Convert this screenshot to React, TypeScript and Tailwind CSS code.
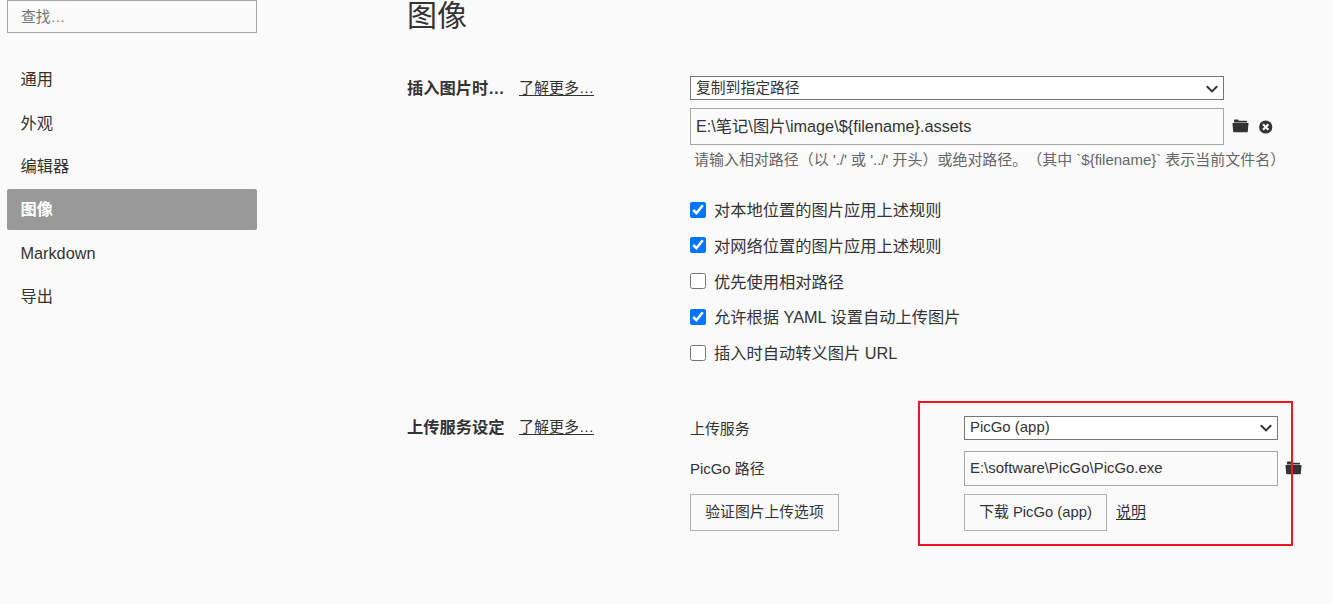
import { useState } from "react";

const NAV_ITEMS = ["通用", "外观", "编辑器", "图像", "Markdown", "导出"];

const RULES = [
  { label: "对本地位置的图片应用上述规则", checked: true },
  { label: "对网络位置的图片应用上述规则", checked: true },
  { label: "优先使用相对路径", checked: false },
  { label: "允许根据 YAML 设置自动上传图片", checked: true },
  { label: "插入时自动转义图片 URL", checked: false },
];

function FolderIcon() {
  return (
    <svg width="17" height="14" viewBox="0 0 17 14" fill="#333" className="mb-px block shrink-0">
      <path d="M2 3.4V1.4Q2 .6 2.6.6h3.2q.5 0 .7.5l.3.7h7.5q.7 0 .7.7v.9z" />
      <path d="M1 4.1h15q.5 0 .5.5l-.7 7.9q-.1.7-.8.7H2q-.7 0-.8-.7L.5 4.6q0-.5.5-.5z" />
    </svg>
  );
}

function ClearIcon() {
  return (
    <svg width="14" height="14" viewBox="0 0 14 14" className="block shrink-0">
      <circle cx="6.7" cy="7" r="6.6" fill="#333" />
      <path d="M4 4.3l5.4 5.4M9.4 4.3L4 9.7" stroke="#fafafa" strokeWidth="2.2" />
    </svg>
  );
}

function Select({ value, className }: { value: string; className: string }) {
  return (
    <div className={`relative h-6 ${className}`}>
      <select
        defaultValue={value}
        className="block h-6 w-full appearance-none border border-[#767676] bg-white pl-[5px] leading-[20px] outline-none"
      >
        <option>{value}</option>
      </select>
      <svg
        width="12"
        height="8"
        viewBox="0 0 12 8"
        fill="none"
        stroke="#333"
        strokeWidth="2"
        className="pointer-events-none absolute top-[8.5px] right-[6px]"
      >
        <path d="M.8 1.2L6 6.4l5.2-5.2" />
      </svg>
    </div>
  );
}

function SectionTitle({ title }: { title: string }) {
  return (
    <div className="flex w-[283px] shrink-0 items-center gap-[14.5px] leading-6">
      <h2 className="text-[16.25px] font-bold">{title}</h2>
      <a href="#" className="text-[15px] underline underline-offset-2">
        了解更多…
      </a>
    </div>
  );
}

function Sidebar() {
  const [active, setActive] = useState("图像");

  return (
    <aside className="ml-[7px] w-[250px] shrink-0">
      <input
        placeholder="查找…"
        className="block h-[33px] w-full border border-[#a6a6a6] pl-[13px] text-[14.8px] outline-none placeholder:text-[#757575]"
      />
      <nav className="mt-[25.8px] flex flex-col gap-[2.4px]">
        {NAV_ITEMS.map((item) => (
          <button
            key={item}
            onClick={() => setActive(item)}
            className={`h-[41px] rounded-[2px] pl-[13.5px] text-left text-[16.25px] ${
              item === active ? "bg-[#999] font-bold text-white" : ""
            }`}
          >
            {item}
          </button>
        ))}
      </nav>
    </aside>
  );
}

function InsertSection() {
  return (
    <section className="mt-[44px] flex items-start">
      <SectionTitle title="插入图片时…" />
      <div>
        <Select value="复制到指定路径" className="w-[534px] text-[14.8px]" />
        <div className="mt-2 flex items-center">
          <input
            defaultValue={"E:\\笔记\\图片\\image\\${filename}.assets"}
            className="block h-[37px] w-[534px] border border-[#a6a6a6] pb-[3px] pl-[5px] text-[16.25px] outline-none"
          />
          <button className="ml-2">
            <FolderIcon />
          </button>
          <button className="ml-[10px]">
            <ClearIcon />
          </button>
        </div>
        <p className="mt-[3px] pl-1 text-[14.98px] leading-6 whitespace-nowrap text-[#666] [text-spacing-trim:space-all]">
          {"请输入相对路径（以 './' 或 '../' 开头）或绝对路径。（其中 `${filename}` 表示当前文件名）"}
        </p>
        <div className="mt-[19.8px] flex flex-col">
          {RULES.map((rule) => (
            <label key={rule.label} className="flex h-[35.75px] items-center gap-2 text-[16.25px]">
              <input type="checkbox" defaultChecked={rule.checked} className="size-4" />
              <span className="pt-[1.4px]">{rule.label}</span>
            </label>
          ))}
        </div>
      </div>
    </section>
  );
}

function UploadSection() {
  return (
    <section className="mt-[44.4px] flex items-start">
      <SectionTitle title="上传服务设定" />
      <div className="mt-px grid grid-cols-[274px_auto] text-[14.95px]">
        <span className="h-[35px] leading-[25px]">上传服务</span>
        <Select value="PicGo (app)" className="w-[314px] [&>select]:pb-[2px]" />
        <span className="leading-[35px]">PicGo 路径</span>
        <div className="flex items-center">
          <input
            defaultValue={"E:\\software\\PicGo\\PicGo.exe"}
            className="block h-[35px] w-[314px] border border-[#a6a6a6] pb-[2px] pl-[5px] outline-none"
          />
          <button className="ml-[7px]">
            <FolderIcon />
          </button>
        </div>
        <div className="mt-2">
          <button className="h-[37px] w-[149px] border border-[#b3b3b3] text-[14.8px]">
            验证图片上传选项
          </button>
        </div>
        <div className="mt-2 flex items-center gap-[9px]">
          <button className="h-[37px] w-[143px] border border-[#b3b3b3] text-[14.8px]">
            下载 PicGo (app)
          </button>
          <a href="#" className="underline underline-offset-2">
            说明
          </a>
        </div>
      </div>
    </section>
  );
}

function App() {
  return (
    <div className="relative flex h-[604px] w-[1333px] overflow-hidden bg-[#fafafa] font-['Liberation_Sans','Noto_Sans_CJK_SC',sans-serif] text-[#333]">
      <Sidebar />
      <main className="ml-[150px]">
        <h1 className="h-8 text-[30px] leading-8">图像</h1>
        <InsertSection />
        <UploadSection />
      </main>
      {/* highlight around the PicGo settings */}
      <div className="pointer-events-none absolute top-[401px] left-[918px] h-[145px] w-[375px] border-2 border-[#ee1620]" />
    </div>
  );
}

export default App;
